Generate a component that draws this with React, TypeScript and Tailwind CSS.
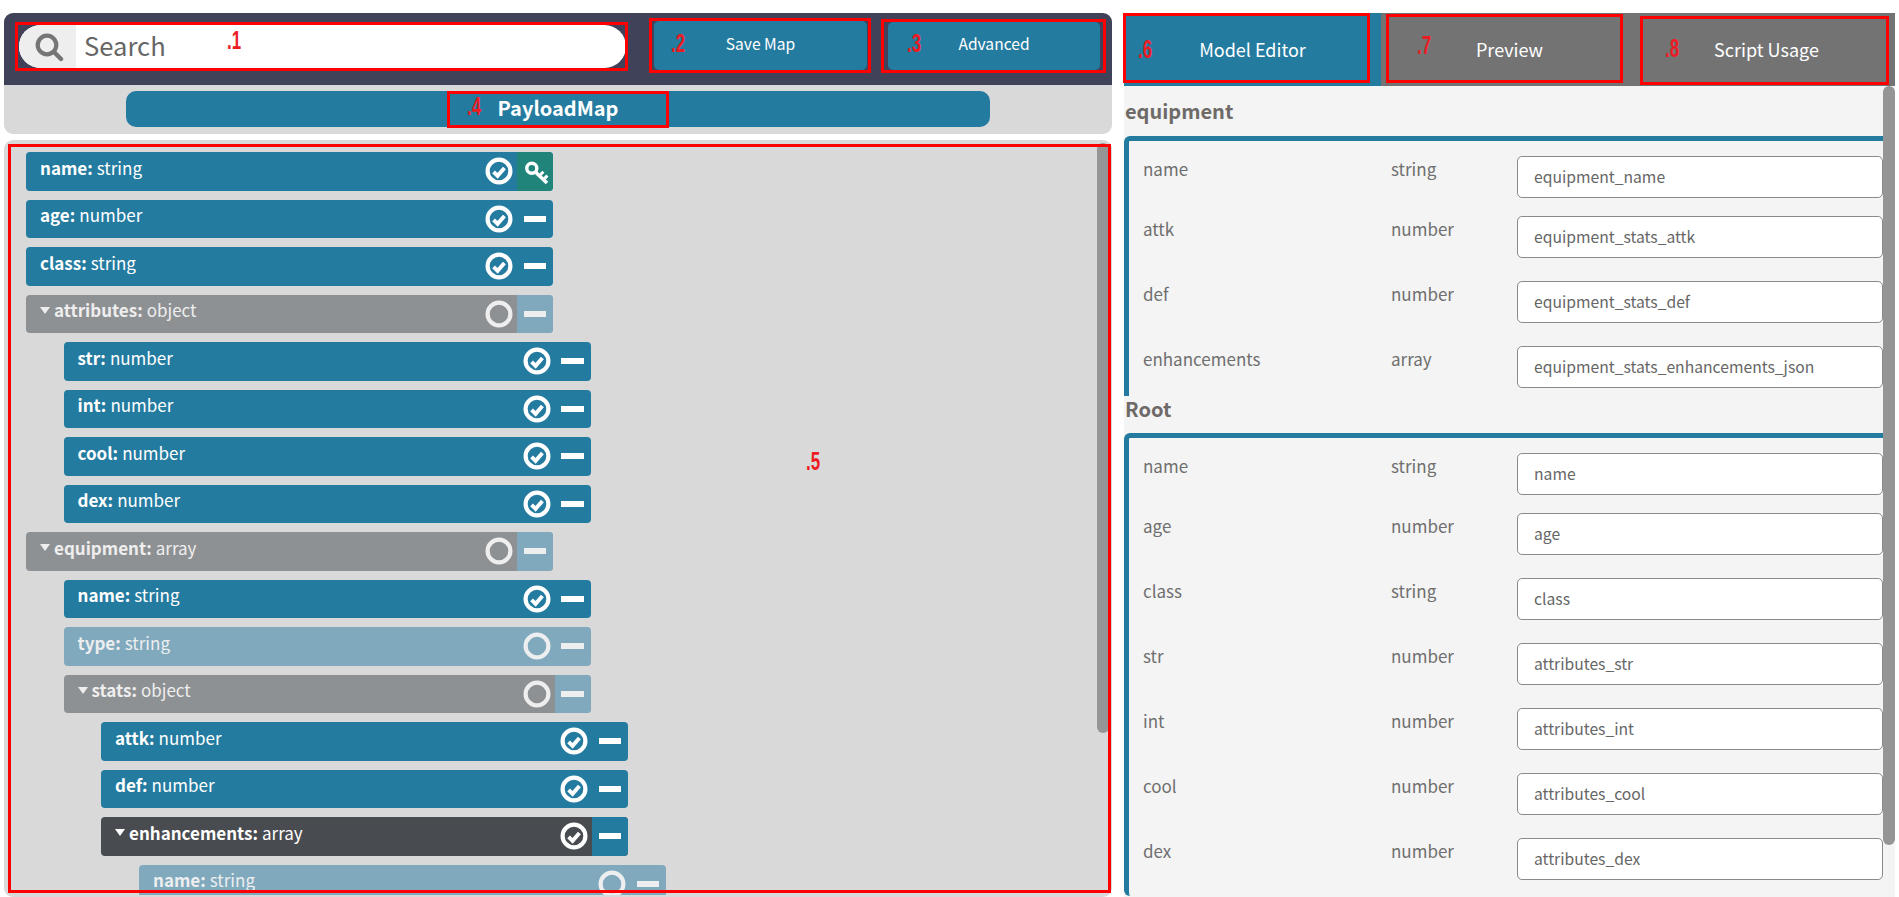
import React from 'react';

type Row = {
  name: string;
  type: string;
  level: 0 | 1 | 2 | 3;
  kind: 'on' | 'off' | 'key' | 'groupOff' | 'groupOn';
};

const treeRows: Row[] = [
  { name: 'name', type: 'string', level: 0, kind: 'key' },
  { name: 'age', type: 'number', level: 0, kind: 'on' },
  { name: 'class', type: 'string', level: 0, kind: 'on' },
  { name: 'attributes', type: 'object', level: 0, kind: 'groupOff' },
  { name: 'str', type: 'number', level: 1, kind: 'on' },
  { name: 'int', type: 'number', level: 1, kind: 'on' },
  { name: 'cool', type: 'number', level: 1, kind: 'on' },
  { name: 'dex', type: 'number', level: 1, kind: 'on' },
  { name: 'equipment', type: 'array', level: 0, kind: 'groupOff' },
  { name: 'name', type: 'string', level: 1, kind: 'on' },
  { name: 'type', type: 'string', level: 1, kind: 'off' },
  { name: 'stats', type: 'object', level: 1, kind: 'groupOff' },
  { name: 'attk', type: 'number', level: 2, kind: 'on' },
  { name: 'def', type: 'number', level: 2, kind: 'on' },
  { name: 'enhancements', type: 'array', level: 2, kind: 'groupOn' },
  { name: 'name', type: 'string', level: 3, kind: 'off' },
];

const indent = ['ml-0', 'ml-[37.5px]', 'ml-[75px]', 'ml-[113px]'];

const rowBg = {
  on: 'bg-[#247ba0] text-white',
  key: 'bg-[#247ba0] text-white',
  off: 'bg-[#81a9bd] text-[#eceeef]',
  groupOff: 'bg-[#8e9194] text-[#eeeeee]',
  groupOn: 'bg-[#484b50] text-white',
};

const segBg = {
  on: '',
  key: 'bg-[#20847a]',
  off: '',
  groupOff: 'bg-[#81a9bd]',
  groupOn: 'bg-[#247ba0]',
};

const equipmentFields = [
  ['name', 'string', 'equipment_name'],
  ['attk', 'number', 'equipment_stats_attk'],
  ['def', 'number', 'equipment_stats_def'],
  ['enhancements', 'array', 'equipment_stats_enhancements_json'],
];

const rootFields = [
  ['name', 'string', 'name'],
  ['age', 'number', 'age'],
  ['class', 'string', 'class'],
  ['str', 'number', 'attributes_str'],
  ['int', 'number', 'attributes_int'],
  ['cool', 'number', 'attributes_cool'],
  ['dex', 'number', 'attributes_dex'],
];

// red review marks that were painted over the screenshot
const marks = [
  'left-[15px] top-[22px] w-[613px] h-[49px]',
  'left-[649px] top-[18px] w-[222px] h-[55px]',
  'left-[881px] top-[19px] w-[225px] h-[54px]',
  'left-[447px] top-[91px] w-[222px] h-[37px]',
  'left-[8px] top-[144px] w-[1103px] h-[749px]',
  'left-[1123px] top-[13px] w-[247px] h-[70px]',
  'left-[1386px] top-[14px] w-[237px] h-[69px]',
  'left-[1640px] top-[16px] w-[249px] h-[69px]',
];

const markLabels = [
  ['.1', 'left-[227px] top-[26px]'],
  ['.2', 'left-[671px] top-[29px]'],
  ['.3', 'left-[907px] top-[29px]'],
  ['.4', 'left-[467px] top-[92px]'],
  ['.5', 'left-[806px] top-[447px]'],
  ['.6', 'left-[1138px] top-[35px]'],
  ['.7', 'left-[1417px] top-[31px]'],
  ['.8', 'left-[1665px] top-[34px]'],
];

const CheckCircle = ({ checked }: { checked: boolean }) => (
  <svg width="28" height="28" viewBox="0 0 28 28" className="shrink-0" fill="none" stroke="currentColor">
    <circle cx="14" cy="14" r="11.4" strokeWidth="4.2" />
    {checked && <path d="M8.6 14.8 L12.6 18.8 L19.4 11" strokeWidth="3.9" />}
  </svg>
);

const KeyIcon = () => (
  <svg width="36" height="38" viewBox="0 0 36 38" fill="none" stroke="white">
    <circle cx="14.8" cy="16.3" r="5" strokeWidth="3.4" />
    <path d="M18.4 20 L30 31" strokeWidth="3.6" />
    <path d="M22.4 23.8 L26.4 19.8 M26.4 27.6 L30.4 23.6" strokeWidth="3" />
  </svg>
);

const TreeRow = ({ row }: { row: Row }) => {
  const isGroup = row.kind === 'groupOff' || row.kind === 'groupOn';
  const checked = row.kind !== 'off' && row.kind !== 'groupOff';
  return (
    <div
      className={`flex h-[38.5px] w-[527px] shrink-0 items-stretch overflow-hidden rounded-[4px] ${indent[row.level]} ${rowBg[row.kind]}`}
    >
      <div className="flex min-w-0 flex-1 items-center pl-[14px] pb-[7px] text-[17px] leading-[24px]">
        {isGroup && (
          <span className="mr-[4px] h-0 w-0 border-x-[5.5px] border-t-[7px] border-x-transparent border-t-current" />
        )}
        <span className="font-bold">{row.name}:</span>
        <span className="ml-[4px]">{row.type}</span>
      </div>
      <div className="flex items-center pr-[4px]">
        <CheckCircle checked={checked} />
      </div>
      <div className={`flex w-[36px] shrink-0 items-center justify-center ${segBg[row.kind]}`}>
        {row.kind === 'key' ? <KeyIcon /> : <div className="h-[6px] w-[22.5px] bg-current" />}
      </div>
    </div>
  );
};

const FieldRow = ({ field }: { field: string[] }) => (
  <div className="flex mb-[23px] first:mb-[18px] last:mb-0 text-[17px] text-[#6f6f6f]">
    <div className="w-[248px] leading-[25px]">{field[0]}</div>
    <div className="w-[126px] leading-[25px]">{field[1]}</div>
    <input
      readOnly
      value={field[2]}
      className="h-[42px] w-[366px] rounded-[5px] border border-[#8a8a8a] bg-white pb-[2px] pl-[16px] text-[15.7px] text-[#666666] outline-none"
    />
  </div>
);

const App: React.FC = () => {
  return (
    <div className="relative h-[897px] w-[1899px] overflow-hidden bg-white font-['Noto_Sans_CJK_SC','Source_Sans_Pro',sans-serif]">
      <div className="flex h-full gap-[12px] pl-[4px] pt-[13px]">
        {/* Mapping side */}
        <div className="flex w-[1108px] flex-col">
          <div className="flex h-[72px] items-start rounded-t-[9px] bg-[#3f4259] pl-[15px] pt-[12px]">
            <div className="flex h-[43px] w-[607px] overflow-hidden rounded-full bg-white">
              <div className="flex w-[57px] items-center justify-center bg-[#eeeeee] pl-[2px]">
                <svg width="30" height="30" viewBox="0 0 30 30" fill="none" stroke="#757575">
                  <circle cx="13" cy="13" r="9.3" strokeWidth="4.2" />
                  <path d="M20 20 L27 27" strokeWidth="4.4" strokeLinecap="round" />
                </svg>
              </div>
              <div className="pl-[8px] pb-[3px] text-[25.6px] leading-[40px] text-[#666666]">Search</div>
            </div>
            <button className="ml-[28px] -mt-[4px] h-[49px] w-[213px] rounded-[5px] bg-[#247ba0] pb-[6px] text-[15.6px] leading-[24px] text-white">
              Save Map
            </button>
            <button className="ml-[21px] -mt-[3px] h-[48px] w-[212px] rounded-[5px] bg-[#247ba0] pb-[7px] text-[15.6px] leading-[24px] text-white">
              Advanced
            </button>
          </div>
          <div className="flex h-[49px] justify-center rounded-b-[9px] bg-[#d9d9d9] pt-[6px]">
            <div className="h-[36px] w-[864px] rounded-[10px] bg-[#247ba0] text-center text-[20px] font-bold leading-[34px] text-white">
              PayloadMap
            </div>
          </div>

          <div className="relative mt-[6px] flex h-[757px] flex-col gap-[9px] overflow-hidden rounded-[9px] border-b-[2px] border-[#d9d9d9] bg-[#d9d9d9] pl-[22px] pt-[12px]">
            {treeRows.map((row, i) => (
              <TreeRow key={i} row={row} />
            ))}
            <div className="absolute right-[3px] top-[3px] h-[590px] w-[12px] rounded-full bg-[#959595]" />
          </div>
        </div>

        {/* Editor side */}
        <div className="flex w-[771px] flex-col">
          <div className="flex h-[73px] bg-[#737373]">
            <div className="flex w-[257px] items-center justify-center bg-[#247ba0] pb-[2px] text-[18px] leading-[26px] text-white">
              Model Editor
            </div>
            <div className="flex w-[257px] items-center justify-center pb-[2px] text-[18px] leading-[26px] text-white">
              Preview
            </div>
            <div className="flex w-[257px] items-center justify-center pb-[2px] text-[18px] leading-[26px] text-white">
              Script Usage
            </div>
          </div>
          <div className="relative flex-1 overflow-hidden bg-[#f4f4f4] pt-[12px]">
            <h2 className="mb-[12px] pl-[1px] text-[20px] font-bold leading-[25px] text-[#6e6a67]">equipment</h2>
            <div className="mr-[12px] mt-[13px] rounded-tl-[6px] border-l-[5px] border-t-[5px] border-[#247ba0] pb-[8px] pl-[14px] pt-[15px]">
              {equipmentFields.map((field) => (
                <FieldRow key={field[2]} field={field} />
              ))}
            </div>
            <h2 className="mb-[12px] pl-[1px] text-[20px] font-bold leading-[25px] text-[#6e6a67]">Root</h2>
            <div className="mr-[12px] rounded-l-[6px] border-l-[5px] border-t-[5px] border-[#247ba0] pb-[16px] pl-[14px] pt-[15px]">
              {rootFields.map((field) => (
                <FieldRow key={field[2]} field={field} />
              ))}
            </div>
            <div className="absolute right-0 top-0 h-[759px] w-[12px] rounded-full bg-[#959595]" />
          </div>
        </div>
      </div>

      {/* red marks sit on top of everything */}
      {marks.map((m) => (
        <div key={m} className={`pointer-events-none absolute border-[3px] border-[#ff0000] ${m}`} />
      ))}
      {markLabels.map(([text, pos]) => (
        <div
          key={text}
          className={`pointer-events-none absolute origin-left scale-x-[0.65] font-['Liberation_Sans_Narrow','Liberation_Sans',sans-serif] text-[26px] font-bold leading-[28px] text-[#ed1c24] ${pos}`}
        >
          {text}
        </div>
      ))}
    </div>
  );
};

export default App;
